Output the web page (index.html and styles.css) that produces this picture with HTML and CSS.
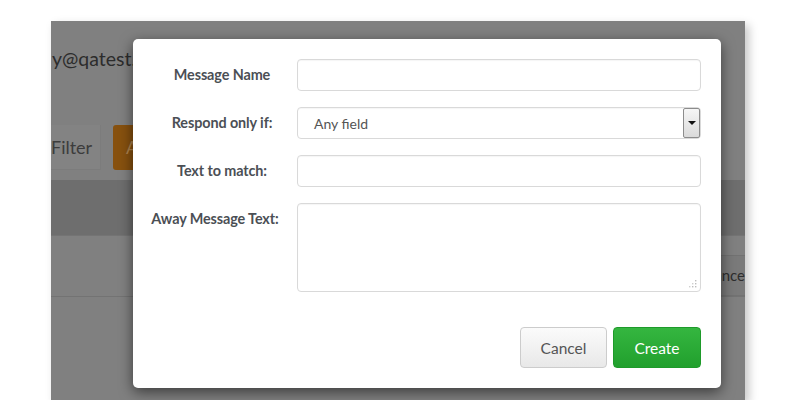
FILE: index.html
```html
<!DOCTYPE html>
<html>
<head>
<meta charset="utf-8">
<link rel="stylesheet" href="styles.css">
</head>
<body>
<div class="shot">
  <div class="page">
    <div class="account">y@qatest.com</div>
    <div class="toolbar">
      <div class="filter">Filter</div>
      <div class="add-btn">Add</div>
    </div>
    <div class="thead"></div>
    <div class="trow"><div class="adv">Advance</div></div>
  </div>

  <div class="modal">
    <div class="form">
      <div class="label">Message Name</div>
      <div class="field"></div>

      <div class="label">Respond only if:</div>
      <div class="field select">
        <span class="select-text">Any field</span>
        <span class="arrow"><span class="tri"></span></span>
      </div>

      <div class="label">Text to match:</div>
      <div class="field"></div>

      <div class="label label-wide">Away Message Text:</div>
      <div class="field area">
        <svg class="grip" width="8" height="8" viewBox="0 0 8 8">
          <rect x="6" y="0" width="1.4" height="1.4" fill="#bdbdbd"/>
          <rect x="6" y="3" width="1.4" height="1.4" fill="#bdbdbd"/>
          <rect x="3" y="3" width="1.4" height="1.4" fill="#cfcfcf"/>
          <rect x="6" y="6" width="1.4" height="1.4" fill="#bdbdbd"/>
          <rect x="3" y="6" width="1.4" height="1.4" fill="#bdbdbd"/>
          <rect x="0" y="6" width="1.4" height="1.4" fill="#cfcfcf"/>
        </svg>
      </div>
    </div>
    <div class="footer">
      <button class="btn cancel">Cancel</button>
      <button class="btn create">Create</button>
    </div>
  </div>
</div>
</body>
</html>
```

FILE: styles.css
```css
html, body {
  margin: 0;
  padding: 0;
  background: #ffffff;
}

body {
  font-family: Lato, "Open Sans", "Liberation Sans", sans-serif;
}

.shot {
  position: relative;
  margin: 21px 0 0 51px;
  width: 694px;
  height: 379px;
  background: #808080;
  overflow: hidden;
  box-shadow: 4px 4px 9px rgba(0, 0, 0, 0.22);
}

.page {
  display: flex;
  flex-direction: column;
}

.account {
  padding: 27px 0 0 1px;
  height: 22px;
  line-height: 22px;
  font-size: 19.5px;
  color: #2c2c2c;
}

.toolbar {
  display: flex;
  margin-top: 55px;
  height: 45px;
  gap: 12px;
}

.filter {
  width: 50px;
  background: #838383;
  border-right: 1px solid #7c7c7c;
  border-bottom: 1px solid #7c7c7c;
  box-sizing: border-box;
  font-size: 18px;
  line-height: 45px;
  color: #3c3c3c;
  overflow: hidden;
}

.add-btn {
  width: 80px;
  background: #87510f;
  border-radius: 3px;
  color: #b0844e;
  font-size: 18px;
  line-height: 45px;
  padding-left: 13px;
  box-sizing: border-box;
}

.thead {
  margin-top: 10px;
  height: 55px;
  background: #6e6e6e;
}

.trow {
  height: 62px;
  border-top: 1px solid #747474;
  border-bottom: 1px solid #737373;
  display: flex;
  justify-content: flex-end;
  box-sizing: border-box;
}

.adv {
  margin-top: 19px;
  height: 41px;
  width: 64px;
  box-sizing: border-box;
  border: 1px solid #727272;
  border-right: none;
  border-radius: 3px 0 0 3px;
  background: #7a7a7a;
  text-align: right;
  font-size: 15px;
  line-height: 39px;
  color: #2e2e2e;
  white-space: nowrap;
}

.modal {
  position: absolute;
  left: 82px;
  top: 18px;
  width: 588px;
  height: 349px;
  box-sizing: border-box;
  padding: 20px 20px 20px 0;
  background: #ffffff;
  border-radius: 5px;
  box-shadow: 0 4px 14px rgba(0, 0, 0, 0.55);
  display: flex;
  flex-direction: column;
}

.form {
  display: grid;
  grid-template-columns: 164px 1fr;
  row-gap: 16px;
}

.label {
  padding-left: 14px;
  text-align: center;
  line-height: 32px;
  font-size: 14.4px;
  font-weight: 700;
  color: #4b4f55;
  letter-spacing: -0.1px;
}

.label-wide {
  padding-left: 0;
}

.field {
  position: relative;
  height: 32px;
  box-sizing: border-box;
  border: 1px solid #d9d9d9;
  border-radius: 4px;
  box-shadow: inset 0 1px 1px rgba(0, 0, 0, 0.04);
  background: #ffffff;
}

.select {
  display: flex;
  align-items: center;
  padding-left: 16px;
}

.select-text {
  font-size: 14px;
  color: #555555;
}

.arrow {
  margin-left: auto;
  align-self: stretch;
  width: 17px;
  box-sizing: border-box;
  border: 1px solid #8c8c8c;
  border-radius: 2px;
  background: linear-gradient(#f6f6f6, #dadada);
  display: flex;
  align-items: center;
  justify-content: center;
}

.tri {
  width: 0;
  height: 0;
  border-left: 4px solid transparent;
  border-right: 4px solid transparent;
  border-top: 4px solid #111111;
}

.area {
  height: 89px;
}

.grip {
  position: absolute;
  right: 3px;
  bottom: 3px;
}

.footer {
  margin-top: 35px;
  display: flex;
  justify-content: flex-end;
  gap: 6px;
}

.btn {
  height: 41px;
  border-radius: 4px;
  font-family: Lato, "Open Sans", "Liberation Sans", sans-serif;
  font-size: 15.5px;
  padding: 0;
  box-sizing: border-box;
}

.cancel {
  width: 87px;
  background: linear-gradient(#fbfbfb, #e8e8e8);
  border: 1px solid #cccccc;
  color: #555555;
}

.create {
  width: 88px;
  background: linear-gradient(#35b640, #21a02d);
  border: 1px solid #1e9a2a;
  color: #ffffff;
}
```
